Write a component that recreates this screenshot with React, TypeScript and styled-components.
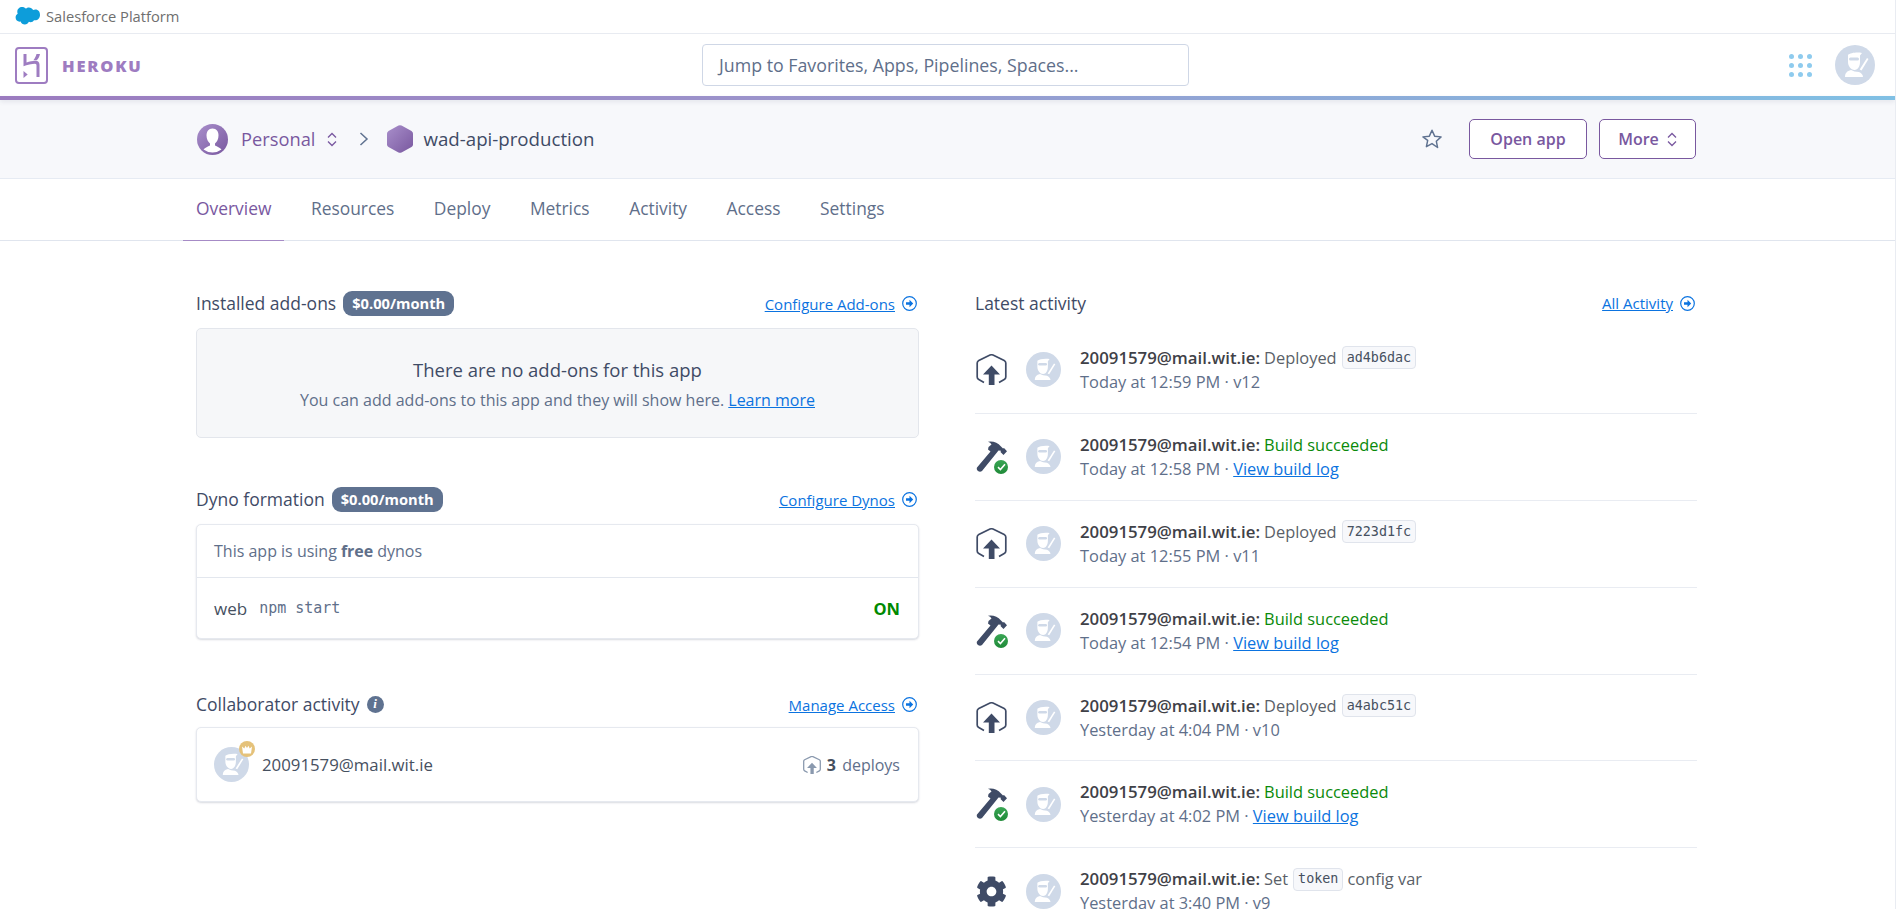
import React from 'react';
import styled, { createGlobalStyle } from 'styled-components';
import { FaCog } from 'react-icons/fa';

const Global = createGlobalStyle`
  html, body { margin: 0; padding: 0; height: 100%; overflow: hidden; background: #fff; }
  body { font-family: "Open Sans", "Noto Sans", sans-serif; color: #3f4b66; }
  * { box-sizing: border-box; }
`;

const Page = styled.div`
  height: 909px;
  overflow: hidden;
  border-right: 1px solid #e9ecf2;
`;
const BrandBar = styled.div`
  height: 34px;
  border-bottom: 1px solid #e8ebf1;
  display: flex;
  align-items: center;
  padding: 0 0 1px 15px;
  gap: 6px;
  font-size: 14.7px;
  color: #6f6f6f;
`;
const NavBar = styled.header`
  height: 62px;
  display: grid;
  grid-template-columns: 1fr 487px 1fr;
  align-items: center;
  padding: 0 20px 0 16px;
`;
const Logo = styled.div`
  display: flex;
  align-items: center;
  gap: 14px;
  margin-left: -1px;
`;
const LogoText = styled.span`
  font-size: 16.5px;
  font-weight: 800;
  letter-spacing: 1.8px;
  color: #9e7cc1;
`;
const Search = styled.div`
  height: 42px;
  border: 1px solid #cfd7e6;
  border-radius: 4px;
  display: flex;
  align-items: center;
  padding-left: 16px;
  font-size: 17.8px;
  color: #5f6f8a;
`;
const NavRight = styled.div`
  display: flex;
  justify-content: flex-end;
  align-items: center;
  gap: 23px;
`;
const GradientBar = styled.div`
  height: 4px;
  background: linear-gradient(90deg, #9b7bbf 0%, #9b93cb 40%, #80c0e4 100%);
  box-shadow: 0 2px 4px rgba(60, 70, 100, 0.1);
  position: relative;
`;
const AppHeader = styled.div`
  height: 79px;
  background: #f7f8fb;
  border-bottom: 1px solid #e6ebf3;
  display: flex;
  align-items: center;
  justify-content: space-between;
  padding: 0 199px 0 197px;
`;
const Crumbs = styled.div`
  display: flex;
  align-items: center;
`;
const Owner = styled.span`
  font-size: 18.3px;
  color: #79589f;
  margin: 0 12px 1px 13px;
`;
const AppName = styled.span`
  font-size: 18.7px;
  color: #3f4b66;
  margin: 0 0 1px 10px;
`;
const Actions = styled.div`
  display: flex;
  align-items: center;
`;
const ActionButton = styled.button<{ $w: number }>`
  width: ${p => p.$w}px;
  height: 40px;
  margin-left: 12px;
  background: #fff;
  border: 1px solid #79589f;
  border-radius: 5px;
  color: #79589f;
  font-family: inherit;
  font-size: 16px;
  font-weight: 600;
  display: flex;
  align-items: center;
  justify-content: center;
  gap: 8px;
  padding: 0;
`;
const Tabs = styled.nav`
  height: 62px;
  border-bottom: 1px solid #e0e5ee;
  display: flex;
  padding-left: 183px;
  gap: 13.5px;
`;
const Tab = styled.a<{ $active?: boolean }>`
  padding: 0 13px 4px;
  height: 62px;
  display: flex;
  align-items: center;
  font-size: 17.4px;
  color: ${p => (p.$active ? '#79589f' : '#5f6f8a')};
  border-bottom: 1px solid ${p => (p.$active ? '#a68bc6' : 'transparent')};
`;
const Columns = styled.main`
  display: grid;
  grid-template-columns: 723px 722px;
  column-gap: 56px;
  padding: 50px 0 0 196px;
`;
const Section = styled.section<{ $after?: number }>`
  margin-bottom: ${p => p.$after ?? 0}px;
`;
const SectionHead = styled.div<{ $h?: number; $mb?: number }>`
  height: ${p => p.$h ?? 25}px;
  margin-bottom: ${p => p.$mb ?? 12}px;
  display: flex;
  align-items: center;
  justify-content: space-between;
`;
const SectionTitle = styled.h2`
  margin: 0 0 1px;
  font-size: 17.5px;
  font-weight: 400;
  color: #3f4b66;
  display: flex;
  align-items: center;
  gap: 7px;
`;
const Pill = styled.span`
  height: 25px;
  padding: 0 9px;
  border-radius: 9px;
  background: #5f7290;
  color: #fff;
  font-size: 14.7px;
  font-weight: 700;
  display: flex;
  align-items: center;
`;
const InfoDot = styled.span`
  width: 17px;
  height: 17px;
  border-radius: 50%;
  background: #5f7290;
  color: #fff;
  font-family: "Liberation Serif", serif;
  font-style: italic;
  font-weight: 700;
  font-size: 13px;
  display: flex;
  align-items: center;
  justify-content: center;
`;
const ActionLink = styled.a`
  display: flex;
  align-items: center;
  gap: 7px;
  padding-right: 2px;
  font-size: 15px;
  color: #0b73e0;
  span { text-decoration: underline; }
`;
const EmptyCard = styled.div`
  height: 110px;
  padding-top: 4px;
  background: #f6f7f9;
  border: 1px solid #e3e6ec;
  border-radius: 5px;
  display: flex;
  flex-direction: column;
  align-items: center;
  justify-content: center;
`;
const EmptyTitle = styled.div`
  font-size: 18.5px;
  color: #3f4b66;
  line-height: 30px;
`;
const EmptySub = styled.div`
  font-size: 16px;
  color: #5f6f8a;
  line-height: 30px;
  a { color: #0b73e0; text-decoration: underline; }
`;
const Card = styled.div`
  background: #fff;
  border: 1px solid #e6e9ef;
  border-radius: 5px;
  box-shadow: 0 1px 2px rgba(60, 70, 100, 0.2);
`;
const CardNote = styled.div`
  height: 53px;
  border-bottom: 1px solid #e3e7ee;
  display: flex;
  align-items: center;
  padding: 0 17px;
  font-size: 16px;
  color: #5f6f8a;
  b { font-weight: 700; margin: 0 4px; }
`;
const CardRow = styled.div<{ $h: number }>`
  height: ${p => p.$h}px;
  display: flex;
  align-items: center;
  justify-content: space-between;
  padding: 0 18px 0 17px;
`;
const RowLeft = styled.div`
  display: flex;
  align-items: center;
`;
const DynoName = styled.span`
  font-size: 17px;
  color: #46505f;
  margin-right: 12px;
`;
const Mono = styled.code`
  font-family: "DejaVu Sans Mono", monospace;
  font-size: 15px;
  color: #5f6f8a;
`;
const On = styled.span`
  font-size: 16.5px;
  font-weight: 700;
  color: #008a00;
`;
const AvatarWrap = styled.div`
  position: relative;
  width: 35px;
  height: 35px;
  margin-right: 13px;
`;
const Crown = styled.span`
  position: absolute;
  top: -6px;
  right: -6px;
  width: 16px;
  height: 16px;
  border-radius: 50%;
  background: #e5c27a;
  display: flex;
  align-items: center;
  justify-content: center;
`;
const Email = styled.span`
  font-size: 16.8px;
  color: #46505f;
`;
const Deploys = styled.span`
  display: flex;
  align-items: center;
  gap: 5px;
  font-size: 16px;
  color: #5f6f8a;
  b { color: #46505f; font-weight: 700; margin-right: 2px; }
`;
const ActivityRow = styled.div`
  height: 86.9px;
  border-bottom: 1px solid #e9ecf2;
  display: flex;
  align-items: center;
`;
const KindIcon = styled.div`
  position: relative;
  width: 31px;
  height: 32px;
  margin: 0 19px 0 1px;
  display: flex;
  align-items: center;
  justify-content: center;
  color: #3f4b66;
`;
const Badge = styled.span`
  position: absolute;
  right: -1px;
  bottom: -1px;
  width: 14px;
  height: 14px;
  border-radius: 50%;
  background: linear-gradient(180deg, #3aa655, #1f8a38);
  display: flex;
  align-items: center;
  justify-content: center;
`;
const ActivityText = styled.div`
  margin-left: 19px;
  font-size: 16.4px;
  line-height: 24px;
`;
const Line = styled.div`
  display: flex;
  align-items: center;
  gap: 4px;
  height: 24px;
  white-space: pre;
  color: #5a5f68;
`;
const Who = styled.b`
  font-size: 16.8px;
  font-weight: 600;
  color: #3f4147;
`;
const Success = styled.span`
  color: #0a8a0a;
`;
const Sha = styled.code`
  height: 23px;
  padding: 0 4px;
  margin-left: 1px;
  border: 1px solid #e0e4ec;
  border-radius: 4px;
  background: #f7f8fb;
  font-family: "DejaVu Sans Mono", monospace;
  font-size: 13.4px;
  color: #46505f;
  display: flex;
  align-items: center;
`;
const When = styled.div`
  color: #5f6f8a;
  a { color: #0b73e0; text-decoration: underline; }
`;

const Ninja = ({ size }: { size: number }) => (
  <svg width={size} height={size} viewBox="0 0 40 40" style={{ display: 'block' }}>
    <circle cx="20" cy="20" r="20" fill="#cfd9e8" />
    <path d="M13 10c2-2 9-3 14-2l-2 2.500v6.500c0 4-2 8-5.500 8S13 21 13 17z" fill="#fff" />
    <rect x="14" y="12.500" width="10" height="3" rx="1.500" fill="#cfd9e8" />
    <path d="M10 32c0-4 2-6 6-7l3.500 1.500L24 27c2 1 4 2.500 4 5z" fill="#fff" />
    <path d="M32 13l1.500 1-7 11.500-1.800-1z" fill="#fff" />
  </svg>
);

const ArrowCircle = () => (
  <svg width="15" height="15" viewBox="0 0 15 15">
    <circle cx="7.500" cy="7.500" r="6.800" fill="none" stroke="#0b73e0" strokeWidth="1.200" />
    <path d="M7.500 3.800L11.200 7.500 7.500 11.200V8.700H4V6.300h3.500z" fill="#0b73e0" />
  </svg>
);

const UpDown = ({ color }: { color: string }) => (
  <svg width="10" height="15" viewBox="0 0 10 15" fill="none" stroke={color} strokeWidth="1.300">
    <path d="M1 5.500L5 1.500l4 4M1 9.500l4 4 4-4" />
  </svg>
);

const DeployIcon = () => (
  <svg width="31" height="31" viewBox="0 0 31 31">
    <path
      d="M8 28.500L2.800 25.600Q1.200 24.700 1.200 23V9Q1.200 7.400 2.800 6.500L14 1.100Q15.500.4 17 1.100L28.200 6.500Q29.800 7.400 29.800 9V23Q29.800 24.700 28.200 25.600L23 28.500"
      fill="none"
      stroke="#3f4b66"
      strokeWidth="1.700"
    />
    <path d="M15.500 11.500L24 20.500H18.500V31H12.800V20.500H7z" fill="#3f4b66" />
  </svg>
);

const HammerIcon = () => (
  <svg width="31" height="32" viewBox="0 0 31 32">
    <path
      d="M1 26.500L14.500 10.500 12 8.500Q12.500 5 15.500 3.500 14.500 1.500 12 .8 20-.3 25 5.500L27 7.500 28 7 31 10.300 27.500 14 24.500 11 25 9.800 22.500 9.500 19.500 13.200 6 30Q4 31.500 2 30 .2 28.500 1 26.500Z"
      fill="#3f4b66"
    />
  </svg>
);

const activities = [
  { kind: 'deploy', sha: 'ad4b6dac', when: 'Today at 12:59 PM · v12' },
  { kind: 'build', when: 'Today at 12:58 PM · ' },
  { kind: 'deploy', sha: '7223d1fc', when: 'Today at 12:55 PM · v11' },
  { kind: 'build', when: 'Today at 12:54 PM · ' },
  { kind: 'deploy', sha: 'a4abc51c', when: 'Yesterday at 4:04 PM · v10' },
  { kind: 'build', when: 'Yesterday at 4:02 PM · ' },
  { kind: 'config', when: 'Yesterday at 3:40 PM · v9' },
];

export default function App() {
  return (
    <Page>
      <Global />
      <BrandBar>
        <svg width="25" height="18" viewBox="0 0 25 18">
          <path
            d="M10.400 2.200C11.300 1.200 12.500.6 13.900.6c1.800 0 3.400 1 4.200 2.500.7-.3 1.500-.5 2.300-.5 3 0 4.600 2.400 4.600 5.300s-2 5.400-5 5.400c-.4 0-.7 0-1-.1-.7 1.200-2 2-3.400 2-.6 0-1.200-.1-1.700-.4-.7 1.600-2.300 2.800-4.100 2.800-2 0-3.600-1.200-4.200-3-.3.100-.6.100-.9.100-2.300 0-4.100-1.900-4.100-4.200 0-1.600.8-2.900 2.100-3.700-.3-.6-.4-1.300-.4-2 0-2.600 2.100-4.700 4.800-4.700 1.400 0 2.900.7 3.900 1.600z"
            fill="#0d9dda"
          />
        </svg>
        Salesforce Platform
      </BrandBar>
      <NavBar>
        <Logo>
          <svg width="33" height="37" viewBox="0 0 33 37" fill="#9e7cc1">
            <rect x="1" y="1" width="31" height="35" rx="3" fill="none" stroke="#9e7cc1" strokeWidth="2" />
            <path d="M8.500 7h3v8.500c3-1 6-1.700 9-1.700 2.500 0 4 1.500 4 4V30h-3V18.500c0-1-.5-1.700-1.500-1.700-3 0-8 1-11.500 2.500z" />
            <path d="M21.500 7h3.500c-.5 2.500-1.500 4.500-3.300 6.300h-3.400c1.500-1.800 2.700-4 3.200-6.300z" />
            <path d="M8.500 24l4.200 3.500-4.200 3.500z" />
          </svg>
          <LogoText>HEROKU</LogoText>
        </Logo>
        <Search>Jump to Favorites, Apps, Pipelines, Spaces...</Search>
        <NavRight>
          <svg width="23" height="23" viewBox="0 0 23 23" fill="#8ecbee">
            {[2.5, 11.5, 20.5].flatMap(y =>
              [2.5, 11.5, 20.5].map(x => <circle key={`${x}-${y}`} cx={x} cy={y} r="2.500" />),
            )}
          </svg>
          <Ninja size={40} />
        </NavRight>
      </NavBar>
      <GradientBar />
      <AppHeader>
        <Crumbs>
          <svg width="31" height="31" viewBox="0 0 31 31">
            <defs>
              <linearGradient id="pg" x1="0" y1="0" x2="1" y2="1">
                <stop offset="0" stopColor="#a98fcb" />
                <stop offset="1" stopColor="#79589f" />
              </linearGradient>
            </defs>
            <circle cx="15.500" cy="15.500" r="15.500" fill="url(#pg)" />
            <path
              d="M15.500 4.500c-4 0-6 3-6 7 0 3.500 1.500 6.500 3.500 8v2c-2 1-5 2-6.500 4a15 15 0 0 0 18 0c-1.500-2-4.500-3-6.500-4v-2c2-1.500 3.500-4.500 3.500-8 0-4-2-7-6-7z"
              fill="#fff"
            />
          </svg>
          <Owner>Personal</Owner>
          <UpDown color="#79589f" />
          <svg width="10" height="16" viewBox="0 0 10 16" fill="none" stroke="#5f7290" strokeWidth="1.500" style={{ margin: '0 18px 0 22px' }}>
            <path d="M1.500 2l6.500 6-6.500 6" />
          </svg>
          <svg width="26" height="28" viewBox="0 0 26 28">
            <defs>
              <linearGradient id="hg" x1="0" y1="0" x2="1" y2="1">
                <stop offset="0" stopColor="#a98fcb" />
                <stop offset="1" stopColor="#79589f" />
              </linearGradient>
            </defs>
            <path
              d="M11.500.5Q13 0 14.500.5L24.500 6Q26 7 26 8.500V19.500Q26 21 24.500 22L14.500 27.500Q13 28 11.500 27.500L1.500 22Q0 21 0 19.500V8.500Q0 7 1.500 6Z"
              fill="url(#hg)"
            />
          </svg>
          <AppName>wad-api-production</AppName>
        </Crumbs>
        <Actions>
          <svg width="22" height="22" viewBox="0 0 24 24" fill="none" stroke="#5f7290" strokeWidth="1.600" strokeLinejoin="round" style={{ marginRight: 14 }}>
            <path d="M12 2.500l2.900 6.400 7 .8-5.200 4.700 1.400 6.900L12 17l-6.100 3.300 1.400-6.900L2.100 9.700l7-.8z" />
          </svg>
          <ActionButton $w={118}>Open app</ActionButton>
          <ActionButton $w={97}>
            More <UpDown color="#79589f" />
          </ActionButton>
        </Actions>
      </AppHeader>
      <Tabs>
        <Tab $active>Overview</Tab>
        <Tab>Resources</Tab>
        <Tab>Deploy</Tab>
        <Tab>Metrics</Tab>
        <Tab>Activity</Tab>
        <Tab>Access</Tab>
        <Tab>Settings</Tab>
      </Tabs>
      <Columns>
        <div>
          <Section $after={49}>
            <SectionHead>
              <SectionTitle>
                Installed add-ons <Pill>$0.00/month</Pill>
              </SectionTitle>
              <ActionLink>
                <span>Configure Add-ons</span> <ArrowCircle />
              </ActionLink>
            </SectionHead>
            <EmptyCard>
              <EmptyTitle>There are no add-ons for this app</EmptyTitle>
              <EmptySub>
                You can add add-ons to this app and they will show here. <a>Learn more</a>
              </EmptySub>
            </EmptyCard>
          </Section>
          <Section $after={53}>
            <SectionHead>
              <SectionTitle>
                Dyno formation <Pill>$0.00/month</Pill>
              </SectionTitle>
              <ActionLink>
                <span>Configure Dynos</span> <ArrowCircle />
              </ActionLink>
            </SectionHead>
            <Card>
              <CardNote>
                This app is using <b>free</b> dynos
              </CardNote>
              <CardRow $h={60}>
                <RowLeft>
                  <DynoName>web</DynoName>
                  <Mono>npm start</Mono>
                </RowLeft>
                <On>ON</On>
              </CardRow>
            </Card>
          </Section>
          <Section>
            <SectionHead $mb={10}>
              <SectionTitle>
                Collaborator activity <InfoDot>i</InfoDot>
              </SectionTitle>
              <ActionLink>
                <span>Manage Access</span> <ArrowCircle />
              </ActionLink>
            </SectionHead>
            <Card>
              <CardRow $h={73}>
                <RowLeft>
                  <AvatarWrap>
                    <Ninja size={35} />
                    <Crown>
                      <svg width="10" height="9" viewBox="0 0 10 9" fill="#fff">
                        <path d="M0 1.500l2.300 2L3.500.8 5 3 6.500.8l1.200 2.700 2.300-2L9 8.500H1z" />
                      </svg>
                    </Crown>
                  </AvatarWrap>
                  <Email>20091579@mail.wit.ie</Email>
                </RowLeft>
                <Deploys>
                  <svg width="18" height="18" viewBox="0 0 31 31" style={{ marginRight: 1 }}>
                    <path
                      d="M8 28.500L2.800 25.600Q1.200 24.700 1.200 23V9Q1.200 7.400 2.800 6.500L14 1.100Q15.500.4 17 1.100L28.200 6.500Q29.800 7.400 29.800 9V23Q29.800 24.700 28.200 25.600L23 28.500"
                      fill="none"
                      stroke="#8a99ae"
                      strokeWidth="2.200"
                    />
                    <path d="M15.500 11.500L24 20.500H18.500V31H12.800V20.500H7z" fill="#8a99ae" />
                  </svg>
                  <span>
                    <b>3</b> deploys
                  </span>
                </Deploys>
              </CardRow>
            </Card>
          </Section>
        </div>
        <div>
          <SectionHead $h={24}>
            <SectionTitle>Latest activity</SectionTitle>
            <ActionLink>
              <span>All Activity</span> <ArrowCircle />
            </ActionLink>
          </SectionHead>
          {activities.map((a, i) => (
            <ActivityRow key={i}>
              <KindIcon>
                {a.kind === 'deploy' && <DeployIcon />}
                {a.kind === 'build' && (
                  <>
                    <HammerIcon />
                    <Badge>
                      <svg width="9" height="8" viewBox="0 0 9 8" fill="none" stroke="#fff" strokeWidth="1.600">
                        <path d="M1 4.200l2.400 2.300L8 1.300" />
                      </svg>
                    </Badge>
                  </>
                )}
                {a.kind === 'config' && <FaCog size={31} />}
              </KindIcon>
              <Ninja size={35} />
              <ActivityText>
                <Line>
                  <Who>20091579@mail.wit.ie:</Who>
                  {a.kind === 'deploy' && (
                    <>
                      <span>Deployed</span>
                      <Sha>{a.sha}</Sha>
                    </>
                  )}
                  {a.kind === 'build' && <Success>Build succeeded</Success>}
                  {a.kind === 'config' && (
                    <>
                      <span>Set</span>
                      <Sha>token</Sha>
                      <span>config var</span>
                    </>
                  )}
                </Line>
                <When>
                  {a.when}
                  {a.kind === 'build' && <a>View build log</a>}
                </When>
              </ActivityText>
            </ActivityRow>
          ))}
        </div>
      </Columns>
    </Page>
  );
}
